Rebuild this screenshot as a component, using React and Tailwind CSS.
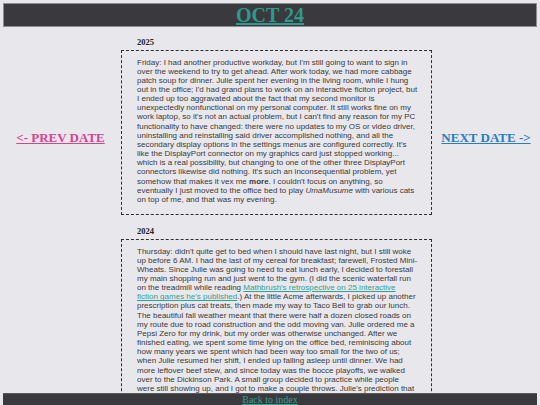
function YearEntry({ year, children, withNav }) {
  const box = (
    <div className="w-[311px] shrink-0 border border-dashed border-[#2e2e2e] pl-[15px] pr-[13px] pt-[6.5px] pb-[10px] text-[8px] leading-[9.15px] text-[#3a3a3a] font-['Liberation_Sans',Arial,sans-serif]">
      <p>{children}</p>
    </div>
  )

  return (
    <section>
      <h3 className="ml-[137px] mb-[3px] text-[8.5px] leading-[10px] font-bold text-[#222] font-['Liberation_Serif',serif]">
        {year}
      </h3>
      <div className="flex items-center">
        <div className="w-[121px] shrink-0 flex justify-center pt-[10px]">
          {withNav && (
            <a href="#" className="text-[13px] leading-[15px] font-bold underline text-[#d5458f] font-['Liberation_Serif',serif]">
              &lt;- PREV DATE
            </a>
          )}
        </div>
        {box}
        <div className="flex-1 flex justify-center pt-[10px]">
          {withNav && (
            <a href="#" className="text-[13px] leading-[15px] font-bold underline text-[#2a7cc4] font-['Liberation_Serif',serif]">
              NEXT DATE -&gt;
            </a>
          )}
        </div>
      </div>
    </section>
  )
}

export default function App() {
  return (
    <div className="min-h-screen bg-[#e8e7ec] pt-[3px] pb-[20px]">
      <header className="mx-[3px] h-[24px] border border-[#8d8d90] bg-[#3a393d] flex items-center justify-center">
        <a href="#" className="text-[20px] leading-none font-bold underline text-[#30998d] font-['Liberation_Serif',serif]">
          OCT 24
        </a>
      </header>

      <main className="mt-[10px] flex flex-col gap-[11px]">
        <YearEntry year="2025" withNav>
          Friday: I had another productive workday, but I'm still going to want to sign in over the weekend to try to get
          ahead. After work today, we had more cabbage patch soup for dinner. Julie spent her evening in the living room,
          while I hung out in the office; I'd had grand plans to work on an interactive ficiton project, but I ended up too
          aggravated about the fact that my second monitor is unexpectedly nonfunctional on my personal computer. It still
          works fine on my work laptop, so it's not an actual problem, but I can't find any reason for my PC functionality
          to have changed: there were no updates to my OS or video driver, uninstalling and reinstalling said driver
          accomplished nothing, and all the secondary display options in the settings menus are configured correctly. It's
          like the DisplayPort connector on my graphics card just stopped working... which is a real possibility, but
          changing to one of the other three DisplayPort connectors likewise did nothing. It's such an inconsequential
          problem, yet somehow that makes it vex me <b>more</b>. I couldn't focus on anything, so eventually I just moved
          to the office bed to play <i>UmaMusume</i> with various cats on top of me, and that was my evening.
        </YearEntry>

        <YearEntry year="2024">
          Thursday: didn't quite get to bed when I should have last night, but I still woke up before 6 AM. I had the last
          of my cereal for breakfast; farewell, Frosted Mini-Wheats. Since Julie was going to need to eat lunch early, I
          decided to forestall my main shopping run and just went to the gym. (I did the scenic waterfall run on the
          treadmill while reading{' '}
          <a href="#" className="underline text-[#33a092]">
            Mathbrush's retrospective on 25 interactive fiction games he's published
          </a>
          .) At the little Acme afterwards, I picked up another prescription plus cat treats, then made my way to Taco Bell
          to grab our lunch. The beautiful fall weather meant that there were half a dozen closed roads on my route due to
          road construction and the odd moving van. Julie ordered me a Pepsi Zero for my drink, but my order was otherwise
          unchanged. After we finished eating, we spent some time lying on the office bed, reminiscing about how many years
          we spent which had been way too small for the two of us; when Julie resumed her shift, I ended up falling asleep
          until dinner. We had more leftover beef stew, and since today was the bocce playoffs, we walked over to the
          Dickinson Park. A small group decided to practice while people were still showing up, and I got to make a couple
          throws. Julie's prediction that the team would be eliminated in the first round turned out to be right, but it
          was still a nice evening outside, and we headed home once the last game wrapped up.
        </YearEntry>
      </main>

      <footer className="fixed bottom-0 left-[3px] right-[3px] h-[12px] border-t border-[#5a5a5e] bg-[#3a393d] flex justify-center">
        <a href="#" className="text-[10px] leading-[12px] underline text-[#33a092] font-['Liberation_Serif',serif]">
          Back to index
        </a>
      </footer>
    </div>
  )
}
